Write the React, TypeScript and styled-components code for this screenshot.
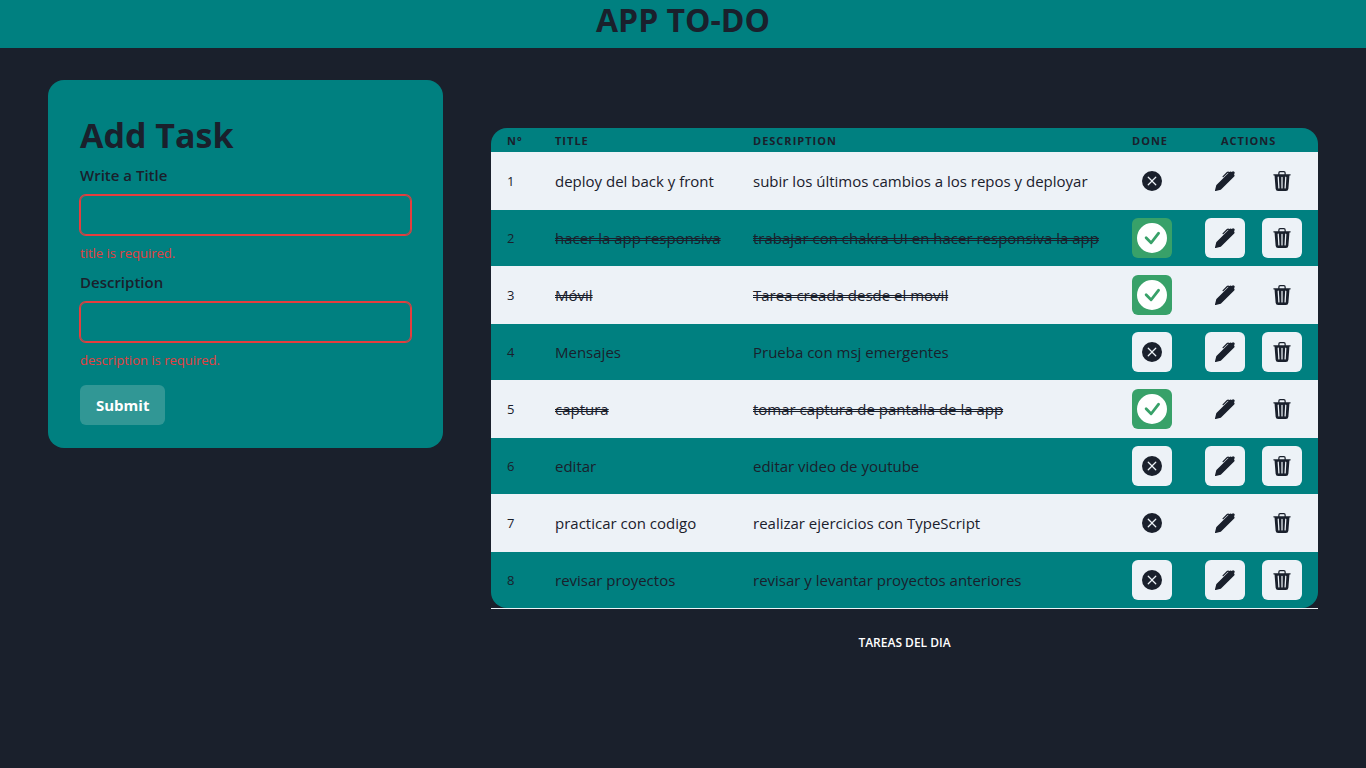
import React from "react";
import styled, { createGlobalStyle } from "styled-components";
import { BsCheckCircleFill, BsPenFill, BsTrash3Fill, BsXCircleFill } from "react-icons/bs";

const ink = "#1a202c";
const teal = "#008080";
const mist = "#edf2f7";

const GlobalStyle = createGlobalStyle`
  *, *::before, *::after { box-sizing: border-box; }
  body {
    margin: 0;
    background: ${ink};
    color: ${ink};
    font-family: "Segoe UI", "Open Sans", sans-serif;
    font-size: 15px;
    line-height: 24px;
  }
  button, input { font: inherit; color: inherit; }
`;

const Header = styled.header`
  height: 48px;
  background: ${teal};
  text-align: center;
`;

const AppTitle = styled.h1`
  margin: 0;
  font-size: 32px;
  line-height: 40px;
  font-weight: 700;
`;

const Main = styled.main`
  display: grid;
  grid-template-columns: 395fr 827fr;
  gap: 48px;
  align-items: start;
  padding: 32px 48px;
`;

const TaskForm = styled.form`
  padding: 32px 32px 23px;
  border-radius: 16px;
  background: ${teal};
`;

const FormTitle = styled.h2`
  margin: 0;
  padding-bottom: 6px;
  font-size: 34px;
  line-height: 46px;
  font-weight: 700;
`;

const Field = styled.div`
  margin-bottom: 8px;
`;

const FieldLabel = styled.label`
  display: block;
  margin-bottom: 8px;
  font-size: 15px;
  line-height: 23px;
  font-weight: 600;
`;

const FieldInput = styled.input`
  display: block;
  width: 100%;
  height: 40px;
  padding: 0 16px;
  border: 1px solid #e53e3e;
  border-radius: 6px;
  background: transparent;
  box-shadow: 0 0 0 1px #e53e3e;
  outline: none;
`;

const FieldError = styled.p`
  margin: 8px 0 0;
  font-size: 13px;
  line-height: 20px;
  color: #e53e3e;
`;

const SubmitButton = styled.button`
  display: block;
  height: 40px;
  margin-top: 15px;
  padding: 0 16px;
  border: 0;
  border-radius: 6px;
  background: #319795;
  color: #fff;
  font-size: 15px;
  font-weight: 700;
`;

const TaskTable = styled.table`
  width: 100%;
  margin-top: 48px;
  border-spacing: 0;
  table-layout: fixed;
`;

const Column = styled.col<{ $width?: number }>`
  width: ${({ $width }) => ($width ? `${$width}px` : "auto")};
`;

const HeadCell = styled.th<{ $indent?: boolean }>`
  padding: 5px 0 3px ${({ $indent }) => ($indent ? 32 : 16)}px;
  border-bottom: 1px solid ${mist};
  background: ${teal};
  font-size: 11px;
  line-height: 16px;
  font-weight: 700;
  letter-spacing: 1px;
  text-align: left;
  text-transform: uppercase;

  &:first-child { border-top-left-radius: 16px; }
  &:last-child { border-top-right-radius: 16px; }
`;

const Row = styled.tr`
  background: ${mist};

  &:nth-child(even) { background: ${teal}; }
  &:last-child { background: transparent; }
  &:last-child td { background: ${teal}; border-bottom: 0; }
  &:last-child td:first-child { border-bottom-left-radius: 16px; }
  &:last-child td:last-child { border-bottom-right-radius: 16px; }
`;

const Cell = styled.td<{ $done?: boolean; $small?: boolean }>`
  padding: 8px 16px;
  border-bottom: 1px solid ${mist};
  font-size: ${({ $small }) => ($small ? 13 : 15)}px;
  text-decoration: ${({ $done }) => ($done ? "line-through double" : "none")};
  white-space: nowrap;
`;

const Actions = styled.div`
  display: flex;
  justify-content: space-between;
`;

const IconButton = styled.button<{ $done?: boolean }>`
  display: flex;
  align-items: center;
  justify-content: center;
  width: 40px;
  height: 40px;
  padding: 0;
  border: 0;
  border-radius: 6px;
  background: ${({ $done }) => ($done ? "#38a169" : mist)};
  color: ${({ $done }) => ($done ? "#fff" : ink)};
`;

const Caption = styled.caption`
  caption-side: bottom;
  padding-top: 24px;
  border-top: 1px solid ${mist};
  color: #fff;
  font-size: 12px;
  line-height: 20px;
  font-weight: 600;
  text-transform: uppercase;
`;

const tasks = [
  { title: "deploy del back y front", description: "subir los últimos cambios a los repos y deployar", done: false },
  { title: "hacer la app responsiva", description: "trabajar con chakra UI en hacer responsiva la app", done: true },
  { title: "Móvil", description: "Tarea creada desde el movil", done: true },
  { title: "Mensajes", description: "Prueba con msj emergentes", done: false },
  { title: "captura", description: "tomar captura de pantalla de la app", done: true },
  { title: "editar", description: "editar video de youtube", done: false },
  { title: "practicar con codigo", description: "realizar ejercicios con TypeScript", done: false },
  { title: "revisar proyectos", description: "revisar y levantar proyectos anteriores", done: false },
];

export default function App() {
  return (
    <>
      <GlobalStyle />
      <Header>
        <AppTitle>APP TO-DO</AppTitle>
      </Header>
      <Main>
        <TaskForm noValidate onSubmit={(event) => event.preventDefault()}>
          <FormTitle>Add Task</FormTitle>
          <Field>
            <FieldLabel htmlFor="title">Write a Title</FieldLabel>
            <FieldInput id="title" type="text" aria-invalid="true" aria-describedby="title-error" />
            <FieldError id="title-error">title is required.</FieldError>
          </Field>
          <Field>
            <FieldLabel htmlFor="description">Description</FieldLabel>
            <FieldInput id="description" type="text" aria-invalid="true" aria-describedby="description-error" />
            <FieldError id="description-error">description is required.</FieldError>
          </Field>
          <SubmitButton type="submit">Submit</SubmitButton>
        </TaskForm>
        <TaskTable>
          <Caption>Tareas del dia</Caption>
          <colgroup>
            <Column $width={48} />
            <Column $width={198} />
            <Column />
            <Column $width={73} />
            <Column $width={129} />
          </colgroup>
          <thead>
            <tr>
              <HeadCell scope="col">N°</HeadCell>
              <HeadCell scope="col">Title</HeadCell>
              <HeadCell scope="col">Description</HeadCell>
              <HeadCell scope="col">Done</HeadCell>
              <HeadCell scope="col" $indent>Actions</HeadCell>
            </tr>
          </thead>
          <tbody>
            {tasks.map((task, index) => (
              <Row key={task.title}>
                <Cell $small>{index + 1}</Cell>
                <Cell $done={task.done}>{task.title}</Cell>
                <Cell $done={task.done}>{task.description}</Cell>
                <Cell>
                  <IconButton type="button" $done={task.done} aria-label="Toggle done">
                    {task.done ? <BsCheckCircleFill size={30} /> : <BsXCircleFill size={20} />}
                  </IconButton>
                </Cell>
                <Cell>
                  <Actions>
                    <IconButton type="button" aria-label="Edit task">
                      <BsPenFill size={20} />
                    </IconButton>
                    <IconButton type="button" aria-label="Delete task">
                      <BsTrash3Fill size={20} />
                    </IconButton>
                  </Actions>
                </Cell>
              </Row>
            ))}
          </tbody>
        </TaskTable>
      </Main>
    </>
  );
}
